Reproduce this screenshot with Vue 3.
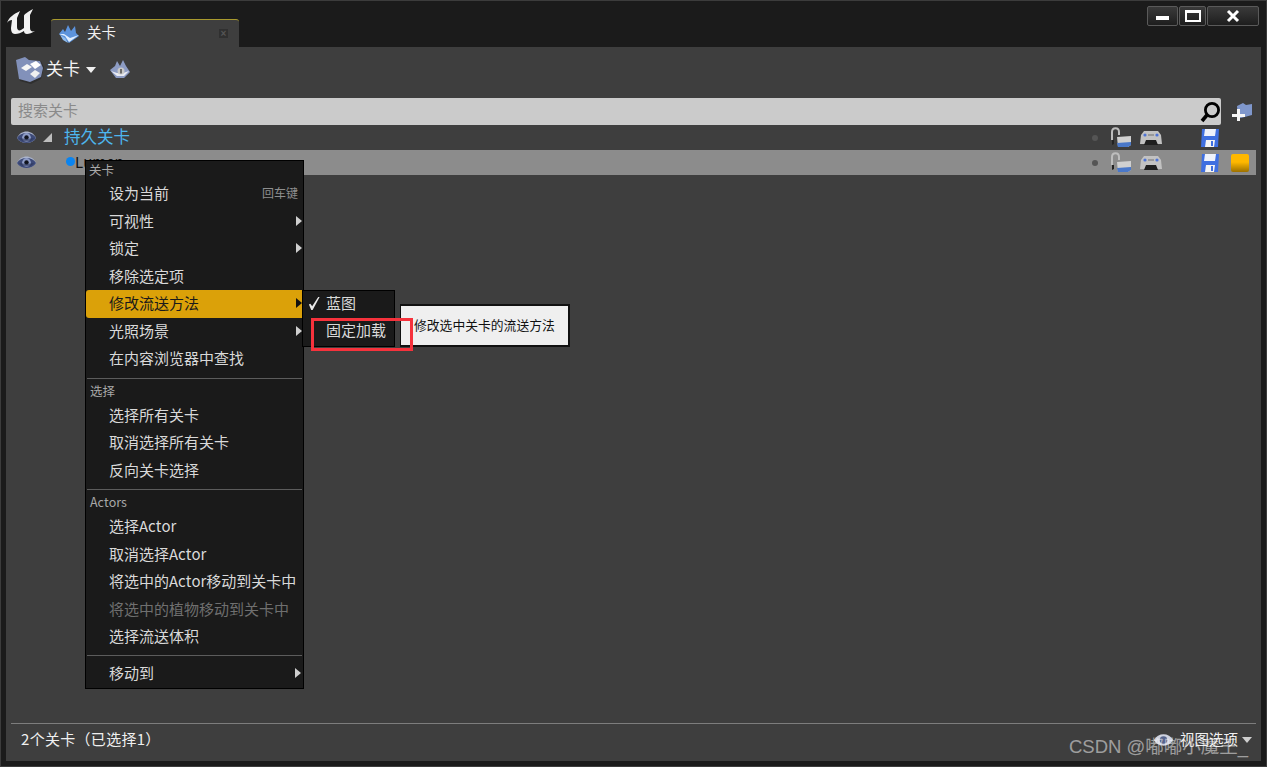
<script setup>
const groups = [
  { title: '关卡', first: true, items: [
    { label: '设为当前', key: '回车键' },
    { label: '可视性', arrow: true },
    { label: '锁定', arrow: true },
    { label: '移除选定项' },
    { label: '修改流送方法', arrow: true, active: true },
    { label: '光照场景', arrow: true },
    { label: '在内容浏览器中查找' },
  ] },
  { title: '选择', items: [
    { label: '选择所有关卡' },
    { label: '取消选择所有关卡' },
    { label: '反向关卡选择' },
  ] },
  { title: 'Actors', items: [
    { label: '选择Actor' },
    { label: '取消选择Actor' },
    { label: '将选中的Actor移动到关卡中' },
    { label: '将选中的植物移动到关卡中', disabled: true },
    { label: '选择流送体积' },
  ] },
  { items: [{ label: '移动到', arrow: true }] },
]
const rows = [
  { id: 'persist', name: '持久关卡' },
  { id: 'level', name: 'Lumen', selected: true },
]
</script>

<template>
  <div class="window">
    <header class="titlebar">
      <svg class="logo" viewBox="0 0 36 30" width="36" height="30">
        <path d="M4 17C6 11 11 8 17 5L14 12V21C14 24 16 25 18 24L21 22V10C21 8 25 6 30 3L27 9V22C27 25 29 26 32 25 29 27 26 28 24 28 22 28 21 27 21 25 18 27 15 28 12 28 9 28 8 25 8 22L9 14C7 14 5 15 4 17Z" fill="#f2f2f2"/>
      </svg>
      <div class="tab">
        <svg class="tab-icon" viewBox="0 0 22 20" width="22" height="20">
          <path d="M1 10 5 5l2 3 3-7 3 6 4-5 1 7 3 3-10 7z" fill="#5c93dc"/>
          <path d="M1 10l6 2 4 6 10-7-9 3-6-4z" fill="#dfeeff"/>
          <path d="M2 11l5 3 3 5-5-3z" fill="#8fbdf0"/>
        </svg>
        <span class="tab-label">关卡</span>
        <span class="tab-close">×</span>
      </div>
      <div class="win-buttons">
        <button class="win-btn min"><i></i></button>
        <button class="win-btn max"><i></i></button>
        <button class="win-btn close">
          <svg viewBox="0 0 14 14" width="14" height="14"><path d="M2 2l10 10M12 2 2 12" stroke="#fff" stroke-width="3"/></svg>
        </button>
      </div>
    </header>

    <main class="panel">
      <div class="toolbar">
        <svg viewBox="0 0 30 30" width="30" height="30">
          <path d="M3 7l10-3 3 3 10-1 3 6-3 12-10 5-11-3-2-10z" fill="#222" opacity=".55"/>
          <path d="M1 5l9-3 4 3 11 1 3 7-2 9-11 5-11-3z" fill="#8291ba"/>
          <path d="M6 13l6-4 5 3-6 4z" fill="#f6f6f6"/>
          <path d="M15 9l6-3 5 4-6 4z" fill="#fff"/>
          <path d="M15 19l5-4 5 3-5 5z" fill="#f0f0f0"/>
        </svg>
        <span class="toolbar-label">关卡</span>
        <span class="caret"></span>
        <svg class="toolbar-info" viewBox="0 0 22 20" width="22" height="20">
          <path d="M1 10 6 6l2-5 3 5 3-6 3 6 4 6-6 6H7z" fill="#8d9cc4"/>
          <path d="M2 11l6 5h7l5-5-6 2H8z" fill="#e8eaf2"/>
          <circle cx="12" cy="11" r="3.5" fill="#c9c9c9"/>
          <rect x="11.3" y="9" width="1.4" height="4.5" fill="#444"/>
        </svg>
      </div>

      <div class="search-row">
        <div class="search">
          <span class="placeholder">搜索关卡</span>
          <svg viewBox="0 0 22 22" width="22" height="22">
            <circle cx="13" cy="9" r="6.6" fill="none" stroke="#000" stroke-width="2.8"/>
            <path d="M8 14 3 20" stroke="#000" stroke-width="3.6"/>
          </svg>
        </div>
        <svg class="add-level" viewBox="0 0 22 20" width="22" height="20">
          <path d="M6 4l6-3 3 2 6-1v11l-11 3H7z" fill="#7f97cc"/>
          <path d="M1 12h5V7h3v5h5v3H9v4H6v-4H1z" fill="#f6f6f6"/>
        </svg>
      </div>

      <div v-for="row in rows" :key="row.id" class="row" :class="{ selected: row.selected }">
        <svg class="eye" viewBox="0 0 22 15" width="21" height="15">
          <path d="M1 8C5-1 17-1 21 8 17 15 5 15 1 8z" fill="#aab3cc"/>
          <path d="M1 8C5 1 17 1 21 8 17 15 5 15 1 8z" fill="#3d4a78"/>
          <circle cx="11" cy="7.5" r="4.6" fill="#8e9cc6"/>
          <circle cx="11" cy="7.5" r="2.3" fill="#10131c"/>
          <path d="M3 8c4 1 12 1 16 0-4 5-12 5-16 0z" fill="#2c3558" opacity=".6"/>
        </svg>
        <span v-if="!row.selected" class="expander"></span>
        <span v-if="!row.selected" class="row-name">{{ row.name }}</span>
        <span v-else class="row-level"><i class="dot"></i>{{ row.name }}</span>
        <span class="row-tools">
          <i class="mini-dot"></i>
          <svg class="lock" viewBox="0 0 22 22" width="22" height="22">
            <path d="M2 13V5c0-5 7-5 7 0v3" fill="none" stroke="#bdbdbd" stroke-width="2"/>
            <path d="M2 13l2 0 0 4-2 1z" fill="#222"/>
            <path d="M7 10l14-1v9l-3 2H8z" fill="#d0d0d0"/>
            <path d="M7 16l14-1v3l-3 2H8z" fill="#4a78c9"/>
          </svg>
          <svg class="pad" viewBox="0 0 22 16" width="22" height="16">
            <path d="M4 1h14l3 4 1 9-5 0-2-3H7l-2 3-5 0 1-9z" fill="#c2c2c2"/>
            <circle cx="5" cy="5" r="1.6" fill="#4e74d6"/>
            <circle cx="17" cy="5" r="1.6" fill="#4e74d6"/>
            <path d="M8 5h6" stroke="#8b8b8b" stroke-width="1.5"/>
            <path d="M6 10h10l2 5H4z" fill="#1f1f1f"/>
          </svg>
          <svg class="disk" viewBox="0 0 20 20" width="20" height="20">
            <path d="M2 1h17l-1 18H1z" fill="#3f6fe0"/>
            <path d="M5 1h11l-1 7H4z" fill="#eef2fb"/>
            <path d="M6 12h9l-1 7H5z" fill="#f4f4f4"/>
            <path d="M11 13h2v5h-2z" fill="#3f6fe0"/>
          </svg>
          <i v-if="row.selected" class="color-chip"></i>
        </span>
      </div>

      <div class="spacer"></div>

      <footer class="footer">
        <span class="count">2个关卡（已选择1）</span>
        <span class="view-options">
          <svg viewBox="0 0 22 14" width="21" height="14">
            <path d="M1 7c4-8 16-8 20 0-4 8-16 8-20 0z" fill="#cfd3e0"/>
            <circle cx="11" cy="7" r="4" fill="#56648c"/>
          </svg>
          <span class="view-label">视图选项</span>
          <span class="caret small"></span>
        </span>
      </footer>
    </main>

    <nav class="menu">
      <section v-for="(g, i) in groups" :key="i" class="menu-group" :class="{ ruled: !g.first }">
        <div v-if="g.title" class="menu-title">{{ g.title }}</div>
        <div
          v-for="item in g.items"
          :key="item.label"
          class="menu-item"
          :class="{ active: item.active, disabled: item.disabled }"
        >
          <span>{{ item.label }}</span>
          <span v-if="item.key" class="menu-key">{{ item.key }}</span>
          <span v-if="item.arrow" class="menu-arrow"></span>
        </div>
      </section>
    </nav>

    <div class="submenu">
      <div class="sub-item">
        <svg viewBox="0 0 14 16" width="13" height="15"><path d="M1 9l1.5-.8L4.500 11 11 1h1.500L5 15H3.500z" fill="#e8e8e8"/></svg>
        <span>蓝图</span>
      </div>
      <div class="sub-item"><span>固定加载</span></div>
    </div>
    <div class="tooltip">修改选中关卡的流送方法</div>
    <div class="redbox"></div>
    <div class="watermark">CSDN @嘟嘟小魔王_</div>
  </div>
</template>

<style>
html, body { margin: 0; background: #1a1a1a; }
</style>

<style scoped>
.window {
  position: relative;
  width: 1267px;
  height: 767px;
  overflow: hidden;
  display: flex;
  flex-direction: column;
  background: #1b1b1b;
  box-shadow: inset 0 0 0 1px #3c3c3c;
  font-family: "Noto Sans CJK SC", "Liberation Sans", sans-serif;
  font-kerning: none;
  font-feature-settings: "chws" 0, "palt" 0, "kern" 0;
  color: #e6e6e6;
  box-sizing: border-box;
}
.titlebar {
  height: 47px;
  flex: none;
  display: flex;
  align-items: flex-end;
  position: relative;
  padding-left: 51px;
  box-sizing: border-box;
}
.logo { position: absolute; left: 3px; top: 6px; }
.tab {
  width: 188px;
  height: 28px;
  box-sizing: border-box;
  background: #3e3e3e;
  border-top: 1px solid #a99a2e;
  border-radius: 3px 3px 0 0;
  display: flex;
  align-items: center;
  padding-left: 7px;
  font-size: 14.5px;
}
.tab-label { margin-left: 7px; color: #f0f0f0; padding-bottom: 4px; }
.tab-close {
  margin-left: auto;
  margin-right: 11px;
  width: 9px;
  height: 9px;
  background: #303030;
  color: #555;
  text-align: center;
  font: 700 10px/9px "Liberation Sans", sans-serif;
}
.win-buttons {
  position: absolute;
  right: 8px;
  top: 6px;
  display: flex;
  gap: 1px;
}
.win-btn {
  height: 20px;
  padding: 0;
  border: 1px solid #5a5a5a;
  border-radius: 2px;
  background: linear-gradient(#3a3a3a, #1e1e1e);
  display: flex;
  align-items: center;
  justify-content: center;
}
.win-btn.min { width: 31px; }
.win-btn.min i { width: 13px; height: 4px; background: #fff; margin-top: 3px; }
.win-btn.max { width: 27px; }
.win-btn.max i { width: 12px; height: 7px; border: 2px solid #fff; border-top-width: 3px; }
.win-btn.close { width: 52px; }
.panel {
  flex: 1;
  margin: 0 6px 6px;
  background: #3e3e3e;
  display: flex;
  flex-direction: column;
  padding: 0 5px;
  min-height: 0;
}
.toolbar {
  height: 51px;
  flex: none;
  display: flex;
  align-items: center;
  padding-left: 4px;
  box-sizing: border-box;
  padding-bottom: 6px;
}
.toolbar-label { font-size: 17px; margin-left: 1px; color: #f4f4f4; padding-bottom: 4px; }
.caret {
  width: 0;
  height: 0;
  border-left: 5.5px solid transparent;
  border-right: 5.5px solid transparent;
  border-top: 6px solid #f0f0f0;
  margin-left: 6px;
}
.toolbar-info { margin-left: 13px; }
.search-row {
  height: 27px;
  flex: none;
  display: flex;
  align-items: center;
}
.search {
  width: 1210px;
  height: 27px;
  box-sizing: border-box;
  background: #cbcbcb;
  border-radius: 2px;
  display: flex;
  align-items: center;
  justify-content: space-between;
  padding: 0 0 0 7px;
  font-size: 15px;
}
.placeholder { color: #8a8a8a; padding-bottom: 4px; }
.add-level { margin-left: 10px; }
.row {
  height: 25px;
  flex: none;
  position: relative;
  display: flex;
  align-items: center;
  padding-left: 5px;
}
.row.selected { background: #8c8c8c; }
.eye { flex: none; }
.expander {
  width: 0;
  height: 0;
  margin-left: 6px;
  border-left: 9px solid transparent;
  border-bottom: 9px solid #bdbdbd;
}
.row-name { margin-left: 12px; font-size: 16.5px; color: #4db6ee; padding-bottom: 4px; }
.row-level {
  margin-left: 29px;
  font-size: 15px;
  color: #111;
  display: flex;
  align-items: center;
  padding-bottom: 2px;
}
.dot {
  width: 9px;
  height: 9px;
  border-radius: 50%;
  background: #0a84f0;
}
.row-tools {
  position: absolute;
  left: 1081px;
  top: 0;
  height: 25px;
  display: flex;
  align-items: center;
}
.mini-dot {
  width: 6px;
  height: 6px;
  border-radius: 50%;
  background: #555;
}
.lock { margin-left: 12px; }
.pad { margin-left: 8px; }
.disk { margin-left: 38px; }
.color-chip {
  width: 18px;
  height: 18px;
  margin-left: 11px;
  border-radius: 2px;
  background: linear-gradient(#ffb800 45%, #9c7000);
}
.spacer { flex: 1; }
.footer {
  height: 38px;
  box-sizing: border-box;
  flex: none;
  border-top: 1px solid #7d7d7d;
  display: flex;
  align-items: center;
  justify-content: space-between;
  padding: 0 4px 6px 10px;
  font-size: 15px;
  color: #f0f0f0;
}
.count { padding-bottom: 2px; letter-spacing: 0.3px; }
.view-options {
  display: flex;
  align-items: center;
  gap: 6px;
  font-size: 14.5px;
}
.view-label { padding-bottom: 3px; }
.caret.small { margin-left: -2px; border-left-width: 5px; border-right-width: 5px; border-top-color: #cfcfcf; }
.menu {
  position: absolute;
  left: 85px;
  top: 160px;
  width: 219px;
  height: 529px;
  box-sizing: border-box;
  background: #1a1a1a;
  border: 1px solid #000;
  font-size: 15px;
}
.menu-group.ruled {
  margin: 5px 1px 0;
  border-top: 1px solid #5c5c5c;
}
.menu-title {
  height: 22px;
  line-height: 22px;
  padding-left: 3px;
  font-size: 12.5px;
  color: #a8a8a8;
  margin-top: 1px;
}
.menu-group:first-child .menu-title { height: 19px; line-height: 18px; margin-top: 0; }
.menu-group:last-child { padding-top: 4px; margin-top: 4px; }
.menu-item {
  height: 27.5px;
  line-height: 25px;
  padding-left: 23px;
  position: relative;
  color: #d9d9d9;
  white-space: nowrap;
}
.menu-group.ruled .menu-item { margin-left: -1px; }
.menu-item.active {
  background: #dba109;
  color: #1a1a1a;
  border-radius: 3px 0 0 3px;
  margin-right: 1px;
}
.menu-item.disabled { color: #6f6f6f; }
.menu-key {
  position: absolute;
  right: 5px;
  top: 0;
  font-size: 12px;
  color: #8e8e8e;
}
.menu-arrow {
  position: absolute;
  right: 1px;
  top: 8px;
  width: 0;
  height: 0;
  border-top: 5px solid transparent;
  border-bottom: 5px solid transparent;
  border-left: 6px solid #cfcfcf;
}
.menu-item.active .menu-arrow { border-left-color: #111; right: 0; }
.submenu {
  position: absolute;
  left: 302px;
  top: 290px;
  width: 93px;
  height: 57px;
  box-sizing: border-box;
  background: #1a1a1a;
  border: 1px solid #000;
  font-size: 15px;
  color: #d9d9d9;
}
.sub-item {
  height: 27px;
  box-sizing: border-box;
  display: flex;
  align-items: center;
  padding: 0 0 4px 23px;
  position: relative;
  white-space: nowrap;
}
.sub-item svg { position: absolute; left: 5px; top: 5px; }
.tooltip {
  position: absolute;
  left: 400px;
  top: 304px;
  width: 170px;
  height: 43px;
  box-sizing: border-box;
  background: #efefef;
  border: 1px solid #111;
  border-width: 2px 2px 2px 1px;
  padding-left: 13px;
  font-size: 12.8px;
  line-height: 37px;
  color: #111;
  white-space: nowrap;
}
.redbox {
  position: absolute;
  left: 311px;
  top: 318px;
  width: 102px;
  height: 33px;
  box-sizing: border-box;
  border: 3px solid #f6323c;
}
.watermark {
  position: absolute;
  left: 1069px;
  top: 734px;
  font-family: "Liberation Sans", "Noto Sans CJK SC", sans-serif;
  font-size: 18.5px;
  line-height: 26px;
  color: rgba(255, 255, 255, 0.5);
  white-space: nowrap;
}
</style>
